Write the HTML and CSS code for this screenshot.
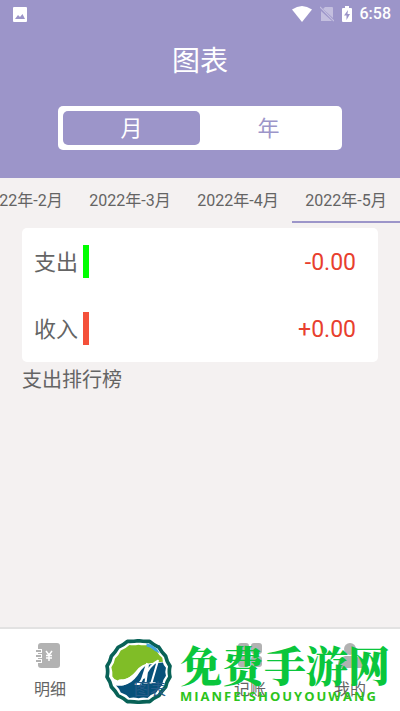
FILE: index.html
```html
<!DOCTYPE html>
<html lang="zh-CN">
<head>
<meta charset="utf-8">
<meta name="viewport" content="width=device-width, initial-scale=1">
<title>图表</title>
<link rel="stylesheet" href="styles.css">
</head>
<body>
<header class="header">
  <div class="status">
    <svg class="status-photo" width="14" height="15" viewBox="0 0 14 15"><rect width="14" height="15" rx="1" fill="#fff"/><path d="M2 12l3-4 2 2 2.500-3L12 12z" fill="#9c95c9"/></svg>
    <div class="status-right">
      <svg width="20" height="16" viewBox="0 0 20 16"><path d="M0 3.500Q10-3.500 20 3.500L10 16z" fill="#fff"/></svg>
      <svg width="14" height="16" viewBox="0 0 14 16"><path d="M5 1h7q1 0 1 1v10L3 3zM1 5l11 10H1z" fill="#c4bfdf"/><path d="M0 1l14 14" stroke="#c4bfdf" stroke-width="1.200"/></svg>
      <svg width="10" height="16" viewBox="0 0 10 16"><path d="M3 0h4v2h2q1 0 1 1v12q0 1-1 1H1q-1 0-1-1V3q0-1 1-1h2z" fill="#fff"/><path d="M6 4L2 9.500h2.500V14L8 8H5.500z" fill="#9c95c9"/></svg>
      <span class="clock">6:58</span>
    </div>
  </div>
  <h1 class="title">图表</h1>
  <div class="segment">
    <button class="segment-item segment-active" type="button">月</button>
    <button class="segment-item" type="button">年</button>
  </div>
</header>
<nav class="months">
  <a class="month" href="#m2">2022年-2月</a>
  <a class="month" href="#m3">2022年-3月</a>
  <a class="month" href="#m4">2022年-4月</a>
  <a class="month month-active" href="#m5">2022年-5月</a>
</nav>
<main class="content">
  <section class="card">
    <div class="row"><span class="label">支出</span><span class="bar bar-out"></span><span class="amount">-0.00</span></div>
    <div class="row"><span class="label">收入</span><span class="bar bar-in"></span><span class="amount">+0.00</span></div>
  </section>
  <h2 class="rank">支出排行榜</h2>
</main>
<footer class="footer">
  <nav class="tabs">
    <a class="tab" href="#detail">
      <svg width="30" height="26" viewBox="0 0 30 26"><rect x="3" y="0" width="22" height="25" rx="3" fill="#b2b2b2"/><path d="M3 8h4M3 13h4M3 18h4" stroke="#fff" stroke-width="4"/><path d="M1 8h5M1 13h5M1 18h5" stroke="#b2b2b2" stroke-width="2"/><path d="M11 8l3 4 3-4M14 12v6M11 12.500h6M11 15h6" stroke="#fff" stroke-width="1.500" fill="none"/></svg>
      <span>明细</span>
    </a>
    <a class="tab tab-active" href="#chart">
      <svg width="26" height="26" viewBox="0 0 26 26"><path d="M3 14h4v10H3zM11 8h4v16h-4zM19 2h4v22h-4z" fill="#9c95c9"/></svg>
      <span class="tab-name">图表</span>
    </a>
    <a class="tab" href="#add">
      <svg width="26" height="26" viewBox="0 0 26 26"><g fill="#b2b2b2"><rect x="1" y="0" width="11" height="11" rx="3"/><rect x="14" y="0" width="11" height="11" rx="3"/><rect x="1" y="13" width="11" height="11" rx="3"/><rect x="14" y="13" width="11" height="11" rx="3"/></g></svg>
      <span>记账</span>
    </a>
    <a class="tab" href="#mine">
      <svg width="26" height="26" viewBox="0 0 26 26"><circle cx="13" cy="6" r="6" fill="#b2b2b2"/><path d="M1 25v-4q0-6 7-8h10q7 2 7 8v4z" fill="#b2b2b2"/></svg>
      <span>我的</span>
    </a>
  </nav>
  <div class="brand">
    <svg class="brand-logo" width="67" height="65" viewBox="0 0 200 194">
      <path d="M67 7Q83 8 100 5Q117 8 133 7Q145 18 161 25Q169 39 181 51Q184 67 194 81Q190 97 194 113Q184 127 181 143Q169 155 161 169Q145 176 133 187Q117 186 100 189Q83 186 67 187Q55 176 39 169Q31 155 19 143Q16 127 6 113Q10 97 6 81Q16 67 19 51Q31 39 39 25Q55 18 67 7Z" fill="#fff" stroke="#086257" stroke-width="11" stroke-linejoin="round"/>
      <path d="M73 18Q87 20 100 17Q113 20 127 18Q138 29 153 34Q160 47 171 56L173 68L133 72Q108 74 94 94Q75 117 55 121Q42 119 38 124Q27 122 22 112Q23 97 19 84Q28 72 30 58Q41 49 47 34Q62 29 73 18Z" fill="#80bd27"/>
      <path d="M173 70Q174 78 182 86Q178 98 182 110Q172 122 170 138Q160 148 153 160Q138 165 127 176Q113 173 100 177Q87 173 73 176Q63 165 47 160Q42 147 33 139Q55 143 73 128Q90 112 109 86Q126 74 173 70Z" fill="#07517a"/>
      <path d="M26 123Q40 129 46 122Q70 120 88 103Q105 80 124 76Q108 90 97 109Q79 134 56 138Q37 139 26 123Z" fill="#fff"/>
      <path d="M95 134Q106 134 112 116L126 72M121 130L128 78L116 116Q135 76 158 65L139 130" fill="none" stroke="#fff" stroke-width="6" stroke-linejoin="round"/>
      <path d="M89 135h20M115 131h13M133 131h18" stroke="#fff" stroke-width="4"/>
      <path d="M124 13l15 4 16 12 9 14-15-7-13-10-12-4z" fill="#43a5dc"/>
    </svg>
    <div class="brand-text">
      <span class="brand-name">免费手游网</span>
      <span class="brand-latin">MIANFEISHOUYOUWANG</span>
    </div>
  </div>
</footer>
</body>
</html>
```
FILE: styles.css
```css
* { box-sizing: border-box; }

body {
  margin: 0;
  min-height: 100vh;
  display: flex;
  flex-direction: column;
  background: #f4f1f1;
  color: #646464;
  font-family: Roboto, "Noto Sans CJK SC", sans-serif;
  overflow-x: hidden;
}

a { color: inherit; text-decoration: none; }

svg { display: block; flex: none; }

.header {
  padding-bottom: 28px;
  background: #9c95c9;
  color: #fff;
}

.status {
  height: 28px;
  padding: 0 9px 0 13px;
  display: flex;
  justify-content: space-between;
  align-items: center;
}

.status-right {
  display: flex;
  align-items: center;
  gap: 8px;
}

.clock {
  font-size: 16px;
  font-weight: 500;
  line-height: 20px;
}

.title {
  margin: 14px 0 24px;
  font-size: 28px;
  font-weight: 400;
  line-height: 40px;
  text-align: center;
}

.segment {
  width: 71%;
  margin: 0 auto;
  padding: 5px;
  display: flex;
  border-radius: 5px;
  background: #fff;
}

.segment-item {
  flex: 1;
  height: 34px;
  padding: 2px 0 0;
  border: 0;
  border-radius: 5px;
  background: none;
  color: #9c95c9;
  font: inherit;
  font-size: 22px;
  line-height: 32px;
}

.segment-active {
  background: #9c95c9;
  color: #fff;
}

.months {
  display: flex;
  justify-content: flex-end;
  overflow: hidden;
}

.month {
  flex: 0 0 27%;
  height: 45px;
  border-bottom: 2px solid transparent;
  font-size: 16px;
  line-height: 46px;
  text-align: center;
  white-space: nowrap;
}

.month-active { border-color: #9c95c9; }

.content {
  flex: 1;
  padding: 5px 22px;
}

.card {
  border-radius: 5px;
  background: #fff;
}

.row {
  height: 67px;
  padding: 0 22px 0 12px;
  display: flex;
  align-items: center;
  gap: 5px;
}

.label {
  padding-top: 2px;
  font-size: 22px;
  line-height: 32px;
}

.bar {
  width: 6px;
  height: 33px;
}

.bar-out { background: #0f0; }

.bar-in { background: #f4503a; }

.amount {
  margin-left: auto;
  padding-top: 2px;
  color: #e83f2e;
  font-size: 23px;
}

.rank {
  margin: 0;
  font-size: 20px;
  font-weight: 400;
  line-height: 36px;
}

.footer {
  position: relative;
  border-top: 2px solid #e2e2e2;
  background: #fff;
}

.tabs {
  display: flex;
  padding: 14px 0 8px;
}

.tab {
  flex: 1;
  display: flex;
  flex-direction: column;
  align-items: center;
  gap: 8px;
  font-size: 16px;
  line-height: 26px;
}

.tab-active { color: #285b88; }

.tab-name {
  position: relative;
  z-index: 1;
}

.brand {
  position: absolute;
  top: 10px;
  right: 10px;
  display: flex;
  gap: 8px;
  color: #0ac63c;
}

.brand-text {
  display: flex;
  flex-direction: column;
}

.brand-name {
  font-family: "Noto Serif CJK SC", "Noto Sans CJK SC", serif;
  font-size: 42px;
  font-weight: 900;
  line-height: 50px;
}

.brand-latin {
  color: #2cc41c;
  font-family: "Open Sans", sans-serif;
  font-size: 13px;
  font-weight: 700;
  letter-spacing: 2px;
  line-height: 14px;
}
```
